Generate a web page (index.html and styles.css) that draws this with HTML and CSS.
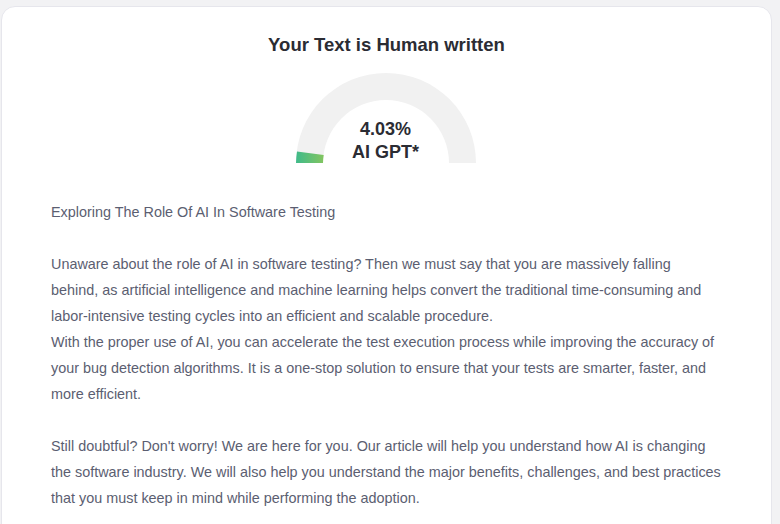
FILE: index.html
```html
<!DOCTYPE html>
<html>
<head>
<meta charset="utf-8">
<link rel="stylesheet" href="styles.css">
</head>
<body>
<div class="card">
  <h1 class="title">Your Text is Human written</h1>
  <div class="gauge">
    <svg class="gauge-svg" width="182" height="92" viewBox="0 0 182 92">
      <defs>
        <linearGradient id="g" x1="0" y1="0" x2="1" y2="0">
          <stop offset="0" stop-color="#3fba8a"/>
          <stop offset="1" stop-color="#82c560"/>
        </linearGradient>
      </defs>
      <path d="M1 91 A90 90 0 0 1 181 91 L154 91 A63 63 0 0 0 28 91 Z" fill="#f1f1f1"/>
      <path d="M1 91 A90 90 0 0 1 2.0 79.6 L28.7 83.1 A63 63 0 0 0 28 91 Z" fill="url(#g)"/>
    </svg>
    <div class="gauge-label">
      <div>4.03%</div>
      <div>AI GPT*</div>
    </div>
  </div>
  <div class="content">
    <p class="para">Exploring The Role Of AI In Software Testing</p>
    <p class="para">Unaware about the role of AI in software testing? Then we must say that you are massively falling<br>behind, as artificial intelligence and machine learning helps convert the traditional time-consuming and<br>labor-intensive testing cycles into an efficient and scalable procedure.<br>With the proper use of AI, you can accelerate the test execution process while improving the accuracy of<br>your bug detection algorithms. It is a one-stop solution to ensure that your tests are smarter, faster, and<br>more efficient.</p>
    <p class="para">Still doubtful? Don't worry! We are here for you. Our article will help you understand how AI is changing<br>the software industry. We will also help you understand the major benefits, challenges, and best practices<br>that you must keep in mind while performing the adoption.</p>
  </div>
</div>
</body>
</html>
```

FILE: styles.css
```css
html, body {
  margin: 0;
  padding: 0;
  background: #f2f2f4;
  font-family: "Liberation Sans", Arial, sans-serif;
}
body {
  padding: 6px 8px 0 1px;
  height: 524px;
  box-sizing: border-box;
  overflow: hidden;
}
.card {
  background: #ffffff;
  border: 1px solid #e6e6ec;
  border-radius: 14px;
  height: 600px;
  box-sizing: border-box;
  padding: 26px 0 0 0;
}
.title {
  margin: 0;
  text-align: center;
  font-size: 18.5px;
  font-weight: bold;
  color: #2b2c33;
  line-height: 24px;
}
.gauge {
  position: relative;
  width: 182px;
  height: 92px;
  margin: 15px auto 0;
  left: -1px;
}
.gauge-svg {
  display: block;
}
.gauge-label {
  position: absolute;
  left: 0;
  right: 0;
  top: 46px;
  text-align: center;
  font-size: 18px;
  font-weight: bold;
  color: #2b2c33;
  line-height: 23px;
}
.content {
  margin-top: 35px;
  padding-left: 49px;
  color: #5b5e71;
  font-size: 14.4px;
  line-height: 26px;
  white-space: nowrap;
}
.para {
  margin: 0 0 26px 0;
}
```
